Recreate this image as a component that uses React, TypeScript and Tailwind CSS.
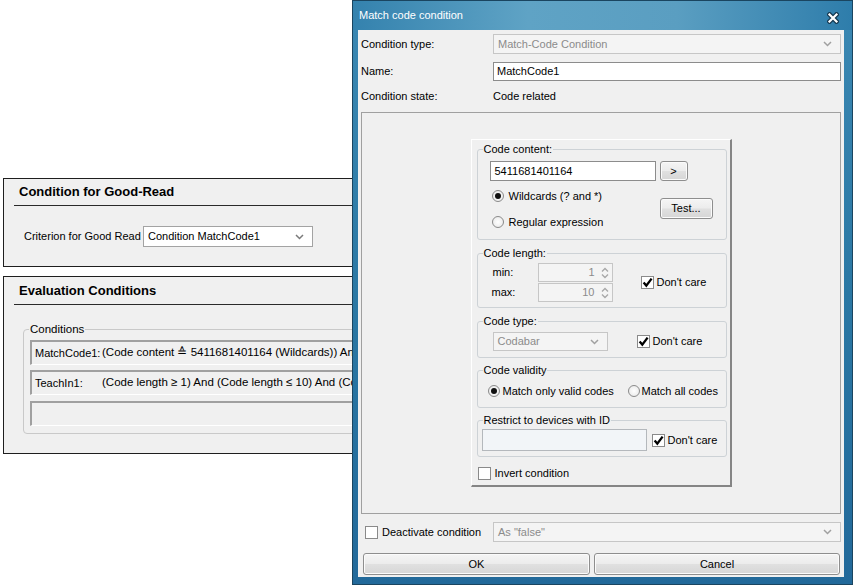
import React from "react";

const Chev = ({ color = "#8c8c8c" }: { color?: string }) => (
  <svg width="9" height="6" viewBox="0 0 9 6">
    <path d="M1 1L4.5 4.5L8 1" fill="none" stroke={color} strokeWidth="1.5" />
  </svg>
);

const SpinArrows = () => (
  <svg width="8" height="14" viewBox="0 0 8 14">
    <path d="M1 5.5L4 2.5L7 5.5" fill="none" stroke="#a8a8a8" strokeWidth="1.4" />
    <path d="M1 8.5L4 11.5L7 8.5" fill="none" stroke="#a8a8a8" strokeWidth="1.4" />
  </svg>
);

function Check({ on }: { on?: boolean }) {
  return (
    <span className="w-[13px] h-[13px] border border-[#8a8a8a] bg-white flex items-center justify-center shrink-0">
      {on && (
        <svg width="11" height="11" viewBox="0 0 11 11">
          <path d="M1.6 5.6L4.3 8.6L9.6 1.6" fill="none" stroke="#000" strokeWidth="2.3" />
        </svg>
      )}
    </span>
  );
}

function Radio({ on }: { on?: boolean }) {
  return (
    <span className="w-[12px] h-[12px] rounded-full border border-[#8a8a8a] bg-[radial-gradient(circle,#ffffff,#e6e6e6)] flex items-center justify-center shrink-0">
      {on && <span className="w-[6px] h-[6px] rounded-full bg-[#111]" />}
    </span>
  );
}

function Group({ label, className, children }: { label: string; className: string; children?: React.ReactNode }) {
  return (
    <div className={`relative border border-[#cdd2d6] rounded-[3px] ${className}`}>
      <span className="absolute -top-[8px] left-[5px] px-[1px] bg-[#f0f0f0] leading-[14px]">{label}</span>
      {children}
    </div>
  );
}

function Btn({ children, className }: { children: React.ReactNode; className: string }) {
  return (
    <div
      className={`flex items-center justify-center border border-[#8e8e8e] rounded-[3px] bg-[linear-gradient(#f5f5f5,#ececec_48%,#e0e0e0_52%,#d6d6d6)] shadow-[inset_0_0_0_1px_#fbfbfb] text-black ${className}`}
    >
      {children}
    </div>
  );
}

export default function App() {
  return (
    <div className="relative w-[853px] h-[588px] bg-white overflow-hidden font-['Liberation_Sans',Arial,sans-serif] text-[11px] text-black">
      {/* background page */}
      <div className="pt-[178px] pl-[3px]">
        <div className="w-[420px] h-[89px] border border-[#1e1e1e] bg-[#f0f0f0] flex flex-col">
          <div className="pt-[5px] pl-[15px] h-[26px] leading-[16px] text-[13px] font-bold">Condition for Good-Read</div>
          <div className="ml-[10px] h-[1px] bg-[#2a2a2a]" />
          <div className="mt-[20px] flex items-center h-[21px] pl-[20px]">
            <span className="w-[119px]">Criterion for Good Read</span>
            <div className="w-[170px] h-[21px] bg-white border border-[#a3a3a3] flex items-center pl-[4px] pr-[8px]">
              <span className="flex-1">Condition MatchCode1</span>
              <Chev color="#7a7a7a" />
            </div>
          </div>
        </div>
        <div className="mt-[9px] w-[420px] h-[178px] border border-[#1e1e1e] bg-[#f0f0f0] flex flex-col">
          <div className="pt-[6px] pl-[15px] h-[27px] leading-[16px] text-[13px] font-bold">Evaluation Conditions</div>
          <div className="ml-[10px] h-[1px] bg-[#2a2a2a]" />
          <div className="mt-[24px] ml-[19px] h-[105px] relative border border-[#c9c9c9] rounded-[4px] pl-[6px] pt-[10px] text-[11.5px]">
            <span className="absolute -top-[8px] left-[5px] px-[1px] bg-[#f0f0f0] leading-[15px]">Conditions</span>
            <div className="h-[25px] border-t-2 border-l-2 border-b border-[#a0a0a0] border-b-white flex items-center pl-[3px] whitespace-nowrap overflow-hidden">
              <span className="w-[67px] shrink-0 whitespace-nowrap text-[11px]">MatchCode1:</span>
              <span>(Code content ≙ 5411681401164 (Wildcards)) And (Code validity = valid codes)</span>
            </div>
            <div className="mt-[5px] h-[25px] border-t-2 border-l-2 border-b border-[#a0a0a0] border-b-white flex items-center pl-[3px] whitespace-nowrap overflow-hidden">
              <span className="w-[67px] shrink-0 text-[11px]">TeachIn1:</span>
              <span>(Code length ≥ 1) And (Code length ≤ 10) And (Code type = Codabar)</span>
            </div>
            <div className="mt-[6px] h-[25px] border-t-2 border-l-2 border-b border-[#a0a0a0] border-b-white" />
          </div>
        </div>
      </div>

      {/* dialog window */}
      <div className="absolute left-[352px] top-0 w-[501px] h-[585px] border border-[#1a4560] bg-[linear-gradient(#3b88b3,#2b78a4_50%,#22699a)] flex flex-col">
        <div className="relative h-[29px] shrink-0 flex items-center pl-[6px] text-white bg-[linear-gradient(to_right,#3482ae,#5fa3c5_35%,#5a9ec1_65%,#2e7dab)]">
          Match code condition
          <svg className="absolute right-[13px] top-[11px]" width="12" height="12" viewBox="0 0 12 12">
            <path d="M2.5 2.5L9.5 9.5M9.5 2.5L2.5 9.5" stroke="#173a52" strokeWidth="4.6" strokeLinecap="square" />
            <path d="M2.5 2.5L9.5 9.5M9.5 2.5L2.5 9.5" stroke="#ffffff" strokeWidth="2.2" strokeLinecap="square" />
          </svg>
        </div>
        <div className="ml-[5px] mr-[8px] mb-[7px] flex-1 bg-[#f0f0f0] flex flex-col">
          <div className="mt-[4px] h-[20px] flex items-center">
            <span className="w-[135px] pl-[3px]">Condition type:</span>
            <div className="w-[348px] h-[20px] bg-[#f4f4f4] border border-[#c6c6c6] flex items-center pl-[4px] pr-[8px] text-[#8b8b8b]">
              <span className="flex-1">Match-Code Condition</span>
              <Chev color="#a0a0a0" />
            </div>
          </div>
          <div className="mt-[8px] h-[19px] flex items-center">
            <span className="w-[135px] pl-[3px]">Name:</span>
            <div className="w-[348px] h-[19px] bg-white border border-[#8c8c8c] flex items-center pl-[3px]">MatchCode1</div>
          </div>
          <div className="mt-[8px] h-[14px] flex items-center">
            <span className="w-[135px] pl-[3px]">Condition state:</span>
            <span>Code related</span>
          </div>

          {/* sunken panel */}
          <div className="mt-[9px] ml-[3px] w-[480px] h-[402px] border border-[#a0a0a0] flex items-center justify-center shrink-0">
            <div className="w-[261px] h-[348px] border-t border-l border-white border-r-2 border-b-2 border-r-[#858585] border-b-[#858585] flex flex-col pl-[5px]">
              {/* Code content */}
              <Group label="Code content:" className="mt-[9px] w-[250px] h-[91px]">
                <div className="mt-[11px] pl-[12px] flex gap-[4px]">
                  <div className="w-[166px] h-[20px] bg-white border border-[#8c8c8c] flex items-center pl-[4px]">5411681401164</div>
                  <Btn className="w-[28px] h-[20px]">&gt;</Btn>
                </div>
                <div className="mt-[2px] flex">
                  <div className="w-[182px] pl-[14px] flex flex-col">
                    <div className="h-[26px] flex items-center gap-[5px]">
                      <Radio on />
                      <span>Wildcards (? and *)</span>
                    </div>
                    <div className="h-[26px] flex items-center gap-[5px]">
                      <Radio />
                      <span>Regular expression</span>
                    </div>
                  </div>
                  <Btn className="mt-[15px] w-[53px] h-[21px]">Test...</Btn>
                </div>
              </Group>

              {/* Code length */}
              <Group label="Code length:" className="mt-[13px] w-[250px] h-[55px]">
                <div className="mt-[9px] flex items-center">
                  <div className="pl-[14px] flex flex-col gap-[1px]">
                    <div className="h-[19px] flex items-center">
                      <span className="w-[46px] pl-[1px]">min:</span>
                      <div className="w-[75px] h-[19px] bg-[#f4f4f4] border border-[#c6c6c6] flex items-center justify-end pr-[3px] gap-[6px] text-[#8b8b8b]">
                        <span>1</span>
                        <SpinArrows />
                      </div>
                    </div>
                    <div className="h-[19px] flex items-center">
                      <span className="w-[46px]">max:</span>
                      <div className="w-[75px] h-[19px] bg-[#f4f4f4] border border-[#c6c6c6] flex items-center justify-end pr-[3px] gap-[6px] text-[#8b8b8b]">
                        <span>10</span>
                        <SpinArrows />
                      </div>
                    </div>
                  </div>
                  <div className="ml-[28px] flex items-center gap-[3px]">
                    <Check on />
                    <span>Don't care</span>
                  </div>
                </div>
              </Group>

              {/* Code type */}
              <Group label="Code type:" className="mt-[13px] w-[250px] h-[37px]">
                <div className="mt-[10px] h-[19px] flex items-center pl-[15px]">
                  <div className="w-[115px] h-[19px] bg-[#f4f4f4] border border-[#c6c6c6] flex items-center pl-[4px] pr-[8px] text-[#8b8b8b]">
                    <span className="flex-1">Codabar</span>
                    <Chev color="#a0a0a0" />
                  </div>
                  <div className="ml-[29px] flex items-center gap-[3px]">
                    <Check on />
                    <span>Don't care</span>
                  </div>
                </div>
              </Group>

              {/* Code validity */}
              <Group label="Code validity" className="mt-[12px] w-[250px] h-[38px]">
                <div className="mt-[12px] h-[16px] flex items-center pl-[10px]">
                  <div className="w-[140px] flex items-center gap-[3px]">
                    <Radio on />
                    <span>Match only valid codes</span>
                  </div>
                  <div className="flex items-center gap-[2px]">
                    <Radio />
                    <span>Match all codes</span>
                  </div>
                </div>
              </Group>

              {/* Restrict */}
              <Group label="Restrict to devices with ID" className="mt-[12px] w-[250px] h-[37px]">
                <div className="mt-[8px] ml-[4px] flex items-center">
                  <div className="w-[165px] h-[22px] bg-[#f2f5f8] border border-[#b4b8bc]" />
                  <div className="ml-[5px] flex items-center gap-[3px]">
                    <Check on />
                    <span>Don't care</span>
                  </div>
                </div>
              </Group>

              <div className="mt-[8px] h-[16px] pl-[1px] flex items-center gap-[4px]">
                <Check />
                <span>Invert condition</span>
              </div>
            </div>
          </div>

          {/* deactivate */}
          <div className="mt-[8px] h-[20px] flex items-center">
            <div className="w-[135px] pl-[7px] flex items-center gap-[4px]">
              <Check />
              <span>Deactivate condition</span>
            </div>
            <div className="w-[348px] h-[20px] bg-[#f4f4f4] border border-[#c6c6c6] flex items-center pl-[4px] pr-[8px] text-[#8b8b8b]">
              <span className="flex-1">As "false"</span>
              <Chev color="#a0a0a0" />
            </div>
          </div>

          {/* buttons */}
          <div className="mt-[11px] h-[22px] flex gap-[4px] pl-[5px]">
            <Btn className="w-[227px] h-[22px]">OK</Btn>
            <Btn className="w-[246px] h-[22px]">Cancel</Btn>
          </div>
        </div>
      </div>
    </div>
  );
}
